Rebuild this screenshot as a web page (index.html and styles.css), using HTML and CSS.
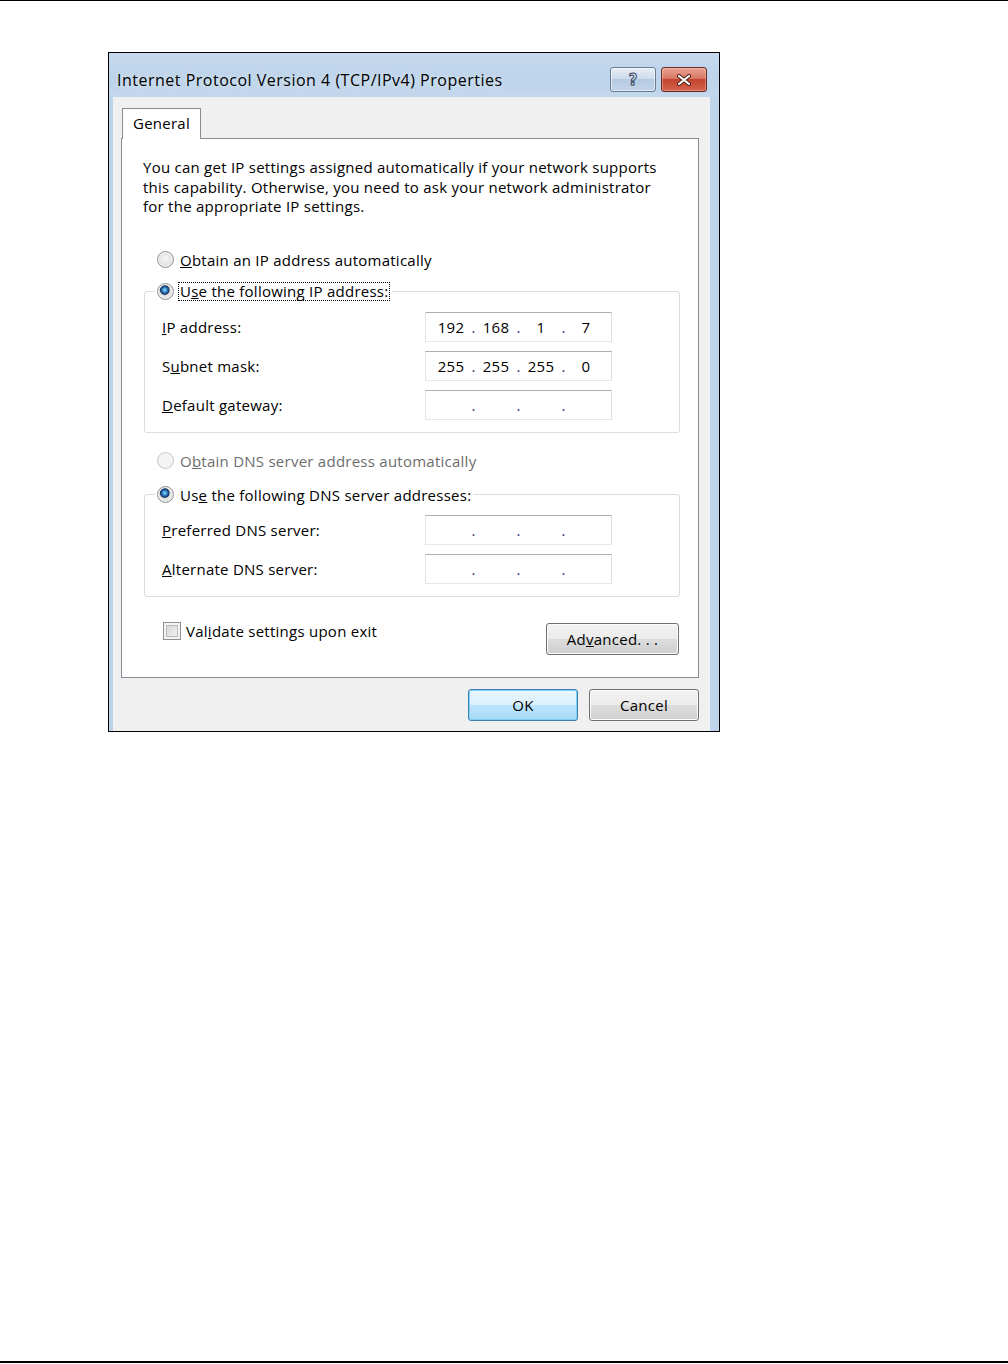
FILE: index.html
```html
<!DOCTYPE html>
<html>
 <head>
  <title>Internet Protocol Version 4 (TCP/IPv4) Properties</title>
  <link rel="stylesheet" href="styles.css">
 </head>
 <body>

 <div class="page">
  <div class="figure">
   <div class="dialog">

    <div class="titlebar">
      <span class="title">Internet Protocol Version 4 (TCP/IPv4) Properties</span>
      <div class="caption-buttons">
        <span class="cap help">?</span>
        <span class="cap close">
          <svg width="16" height="12" viewBox="0 0 16 12">
            <path d="M3 2 L13 10 M13 2 L3 10" stroke="#4a1a14" stroke-width="4" stroke-linecap="round" fill="none"/>
            <path d="M3 2 L13 10 M13 2 L3 10" stroke="#ffffff" stroke-width="2.2" stroke-linecap="round" fill="none"/>
          </svg>
        </span>
      </div>
    </div>

    <div class="client">
      <div class="tabs">
        <span class="tab">General</span>
      </div>

      <div class="panel">
        <p class="intro">You can get IP settings assigned automatically if your network supports<br>this capability. Otherwise, you need to ask your network administrator<br>for the appropriate IP settings.</p>

        <div class="opt first">
          <span class="radio"></span>
          <span><u>O</u>btain an IP address automatically</span>
        </div>

        <fieldset class="group">
          <legend>
            <span class="radio on"></span>
            <span class="focus">U<u>s</u>e the following IP address:</span>
          </legend>
          <div class="field">
            <label><u>I</u>P address:</label>
            <div class="ip"><span>192</span><i>.</i><span>168</span><i>.</i><span>1</span><i>.</i><span>7</span></div>
          </div>
          <div class="field">
            <label>S<u>u</u>bnet mask:</label>
            <div class="ip"><span>255</span><i>.</i><span>255</span><i>.</i><span>255</span><i>.</i><span>0</span></div>
          </div>
          <div class="field">
            <label><u>D</u>efault gateway:</label>
            <div class="ip"><span></span><i>.</i><span></span><i>.</i><span></span><i>.</i><span></span></div>
          </div>
        </fieldset>

        <div class="opt disabled">
          <span class="radio off"></span>
          <span>O<u>b</u>tain DNS server address automatically</span>
        </div>

        <fieldset class="group dns">
          <legend>
            <span class="radio on"></span>
            <span class="plain">Us<u>e</u> the following DNS server addresses:</span>
          </legend>
          <div class="field">
            <label><u>P</u>referred DNS server:</label>
            <div class="ip"><span></span><i>.</i><span></span><i>.</i><span></span><i>.</i><span></span></div>
          </div>
          <div class="field">
            <label><u>A</u>lternate DNS server:</label>
            <div class="ip"><span></span><i>.</i><span></span><i>.</i><span></span><i>.</i><span></span></div>
          </div>
        </fieldset>

        <div class="panel-foot">
          <div class="check-row">
            <span class="checkbox"></span>
            <span>Val<u>i</u>date settings upon exit</span>
          </div>
          <button class="btn advanced">Ad<u>v</u>anced. . .</button>
        </div>
      </div>

      <div class="actions">
        <button class="btn default">OK</button>
        <button class="btn">Cancel</button>
      </div>
    </div>

   </div>
  </div>
  <div class="page-foot"></div>
 </div>

 </body>
</html>
```

FILE: styles.css
```css
body {
  margin: 0;
  background: #fff;
  font-family: "Open Sans", "Noto Sans", sans-serif;
  font-size: 15px;
  letter-spacing: 0.25px;
  color: #000;
}
.page {
  display: flex;
  flex-direction: column;
  height: 1364px;
  box-sizing: border-box;
  border-top: 1px solid #000;
  padding-bottom: 1px;
}
.figure {
  flex: 1;
  padding: 51px 0 0 108px;
}
.page-foot {
  border-top: 2px solid #000;
}

/* window */
.dialog {
  width: 610px;
  height: 678px;
  border: 1px solid #000;
  background: #bdd4ec;
  display: flex;
  flex-direction: column;
}
.titlebar {
  height: 44px;
  flex: none;
  display: flex;
  align-items: flex-start;
  padding: 0 12px 0 8px;
  background: linear-gradient(#c6d9ee, #bcd3ea 60%, #c4d8ed);
}
.title {
  font-size: 16px;
  letter-spacing: 0.5px;
  line-height: 20px;
  margin-top: 17px;
  color: #000;
  text-shadow: 0 0 6px rgba(255, 255, 255, 0.7);
}
.caption-buttons {
  margin-left: auto;
  margin-top: 14px;
  display: flex;
  gap: 5px;
}
.cap {
  width: 46px;
  height: 25px;
  box-sizing: border-box;
  border-radius: 3px;
  display: flex;
  align-items: center;
  justify-content: center;
}
.cap.help {
  border: 1px solid #6b7c92;
  background: linear-gradient(#e6eef7, #cfdcec 45%, #b5c9e0 50%, #c3d5ea);
  box-shadow: inset 0 0 0 1px rgba(255, 255, 255, 0.5);
  font-family: "DejaVu Sans", sans-serif;
  font-weight: bold;
  font-size: 15px;
  color: #dfe8f2;
  -webkit-text-stroke: 1px #34465e;
  letter-spacing: 0;
}
.cap.close {
  border: 1px solid #6b2720;
  background: linear-gradient(#e9a493, #d77865 45%, #c4452f 50%, #d2634e);
  box-shadow: inset 0 0 0 1px rgba(255, 220, 210, 0.35);
}

.client {
  flex: 1;
  margin: 0 9px 0 4px;
  background: #f0f0f0;
  padding: 11px 11px 0 8px;
}

/* tab */
.tabs {
  display: flex;
  height: 30px;
  padding-left: 1px;
}
.tab {
  position: relative;
  z-index: 1;
  width: 79px;
  height: 31px;
  box-sizing: border-box;
  border: 1px solid #898c95;
  border-bottom: none;
  background: #fff;
  text-align: center;
  line-height: 28px;
}
.panel {
  height: 540px;
  box-sizing: border-box;
  border: 1px solid #898c95;
  background: #fff;
  padding: 19px 18px 0 22px;
}
.intro {
  margin: 0 0 0 -1px;
  line-height: 19.5px;
  white-space: nowrap;
}

/* radio options */
.opt {
  display: flex;
  align-items: center;
  gap: 6px;
  height: 20px;
  padding-left: 13px;
}
.opt.first {
  margin-top: 33px;
}
.opt.disabled {
  margin-top: 18px;
  color: #6d6d6d;
}
.radio {
  width: 17px;
  height: 17px;
  flex: none;
  box-sizing: border-box;
  border-radius: 50%;
  border: 1px solid #8f9091;
  background: radial-gradient(circle at 50% 45%, #f6f6f6, #d6d6d6);
  box-shadow: inset 0 0 0 1px #f3f3f3;
}
.radio.on {
  background: radial-gradient(circle at 45% 40%, #a5e0fb 0, #3a93d3 2px, #1c4f8d 3.6px, #12305c 4.4px, #b8b8b8 5px, #ececec 6px, #dcdcdc 8px);
}
.radio.off {
  border-color: #c6c6c6;
  background: #f4f4f4;
}

/* group boxes */
.group {
  margin: 12px 0 0;
  border: 1px solid #d5dfe5;
  border-radius: 3px;
  padding: 10px 0 12px 17px;
}
.group.dns {
  margin-top: 14px;
}
.group legend {
  display: flex;
  align-items: center;
  gap: 4px;
  height: 20px;
  margin-left: -7px;
  padding: 0 2px;
}
.group legend .focus {
  border: 1px dotted #000;
  padding: 0 1px;
  line-height: 17px;
}
.group legend .plain {
  padding-left: 2px;
}
.field {
  display: flex;
  align-items: center;
  height: 30px;
}
.field + .field {
  margin-top: 9px;
}
.field label {
  width: 263px;
}
.ip {
  width: 187px;
  height: 30px;
  box-sizing: border-box;
  border: 1px solid;
  border-color: #abadb3 #dbdfe6 #e3e9ef #e2e3ea;
  background: #fff;
  display: flex;
  align-items: center;
  padding-left: 6px;
}
.ip span {
  width: 38px;
  text-align: center;
}
.ip i {
  width: 7px;
  font-style: normal;
  text-align: center;
  color: #3b2a6a;
}

/* footer row of the tab */
.panel-foot {
  display: flex;
  align-items: flex-start;
  margin-top: 25px;
}
.check-row {
  display: flex;
  align-items: center;
  gap: 5px;
  height: 18px;
  padding-left: 19px;
}
.checkbox {
  width: 18px;
  height: 18px;
  box-sizing: border-box;
  border: 1px solid #8f8f8f;
  background: linear-gradient(135deg, #d2d2d2, #f6f6f6);
  box-shadow: inset 0 0 0 2px #f4f4f4, inset 0 0 0 3px #b9b9b9;
}

/* push buttons */
.btn {
  width: 110px;
  height: 32px;
  box-sizing: border-box;
  border: 1px solid #707070;
  border-radius: 3px;
  background: linear-gradient(#f2f2f2, #ebebeb 50%, #dddddd 50%, #cfcfcf);
  box-shadow: inset 0 0 0 1px #fcfcfc;
  font: inherit;
  letter-spacing: inherit;
  color: #000;
  padding: 0;
}
.btn.advanced {
  width: 133px;
  margin: 1px 1px 0 auto;
}
.btn.default {
  border-color: #3c7fb1;
  background: linear-gradient(#eaf6fd, #d9f0fc 50%, #bee6fd 50%, #a7d9f5);
  box-shadow: inset 0 0 0 1px #7fd1f5;
}
.actions {
  display: flex;
  justify-content: flex-end;
  gap: 11px;
  margin-top: 11px;
}
```
